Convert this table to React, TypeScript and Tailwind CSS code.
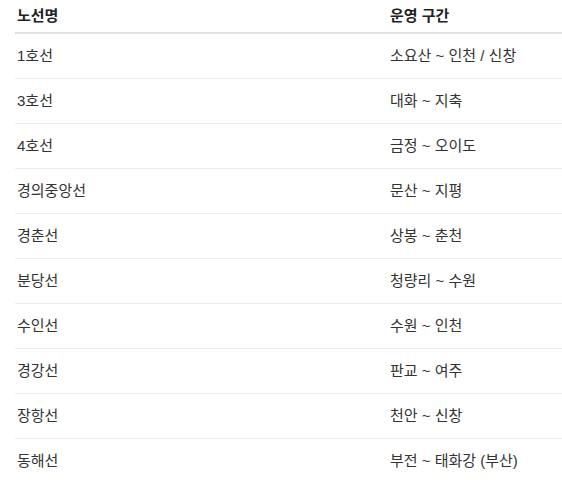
const rows: [string, string][] = [
  ["1호선", "소요산 ~ 인천 / 신창"],
  ["3호선", "대화 ~ 지축"],
  ["4호선", "금정 ~ 오이도"],
  ["경의중앙선", "문산 ~ 지평"],
  ["경춘선", "상봉 ~ 춘천"],
  ["분당선", "청량리 ~ 수원"],
  ["수인선", "수원 ~ 인천"],
  ["경강선", "판교 ~ 여주"],
  ["장항선", "천안 ~ 신창"],
  ["동해선", "부전 ~ 태화강 (부산)"],
];

export default function App() {
  return (
    <div
      className="bg-white pl-[15px] text-[15px] text-[#333]"
      style={{ fontFamily: '"Liberation Sans", "Noto Sans CJK KR", sans-serif' }}
    >
      <div className="grid h-[34px] grid-cols-[375px_1fr] items-center border-b-2 border-[#e2e2e2] font-bold text-[#222]">
        <div className="pl-[2px]">노선명</div>
        <div>운영 구간</div>
      </div>
      {rows.map(([name, range]) => (
        <div
          key={name}
          className="grid h-[45px] grid-cols-[375px_1fr] items-center border-b border-[#eeeeee]"
        >
          <div className="pl-[2px]">{name}</div>
          <div>{range}</div>
        </div>
      ))}
    </div>
  );
}
